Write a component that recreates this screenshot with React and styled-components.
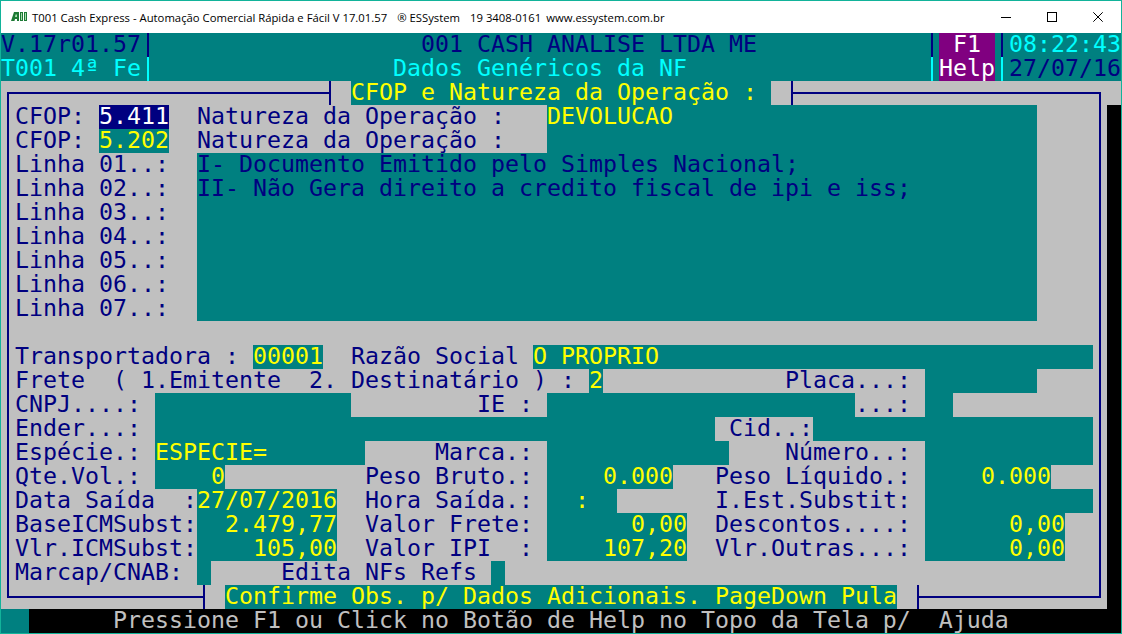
import React from "react";
import styled, { createGlobalStyle } from "styled-components";

const CELL = 14;
const NAVY = "#000080";
const TEAL = "#008080";
const GREY = "#c0c0c0";
const YELLOW = "#ffff00";
const CYAN = "#00ffff";

const Global = createGlobalStyle`
  html, body { margin: 0; padding: 0; background: #fff; overflow: hidden; }
`;

const Window = styled.div`
  width: 1122px;
  height: 634px;
  box-sizing: border-box;
  border: 1px solid #12b39a;
  display: flex;
  flex-direction: column;
  overflow: hidden;
`;

const TitleBar = styled.div`
  height: 32px;
  background: #fff;
  display: flex;
  align-items: center;
  padding-left: 10px;
  font-family: "Open Sans", "Noto Sans", sans-serif;
  font-size: 11.3px;
  color: #000;
  white-space: pre;
`;

const AppIcon = styled.svg`
  width: 16px;
  height: 9px;
  margin-right: 5px;
  margin-top: -1px;
`;

const TitlePart = styled.span`
  margin-left: ${(p) => p.$gap || 0}px;
`;

const Controls = styled.div`
  margin-left: auto;
  display: flex;
  height: 100%;
`;

const ControlButton = styled.div`
  width: 46px;
  display: flex;
  align-items: center;
  justify-content: center;
  svg { width: 10px; height: 10px; display: block; margin-top: -1px; }
`;

const Screen = styled.div`
  width: ${80 * CELL}px;
  display: flex;
  flex-direction: column;
  font-family: "DejaVu Sans Mono", "Liberation Mono", monospace;
  font-size: 23.25px;
  line-height: 22px;
`;

const Row = styled.div`
  display: flex;
  height: 24px;
  background: ${(p) => p.$bg || GREY};
`;

const Body = styled.div`
  display: flex;
  width: ${77 * CELL}px;
`;

const Cell = styled.div`
  flex: none;
  width: ${(p) => p.$cols * CELL}px;
  height: 24px;
  white-space: pre;
  color: ${(p) => p.$fg || NAVY};
  background: ${(p) => p.$bg || "transparent"};
`;

const Label = styled(Cell)``;
const Field = styled(Cell).attrs((p) => ({ $bg: TEAL, $fg: p.$fg || YELLOW }))``;
const Selected = styled(Cell).attrs({ $bg: NAVY, $fg: "#fff" })``;
const HelpKey = styled(Cell).attrs({ $bg: "#800080", $fg: "#fff" })``;
const Shadow = styled(Cell).attrs({ $cols: 1, $bg: "#000" })``;
const StatusText = styled(Cell).attrs({ $fg: GREY })``;

const boxLayers = ({ $up, $down, $left, $right, $color = NAVY }) => {
  const g = `linear-gradient(${$color},${$color})`;
  const layers = [];
  if ($up) layers.push(`${g} 6px 0 / 2px 13px no-repeat`);
  if ($down) layers.push(`${g} 6px 11px / 2px 13px no-repeat`);
  if ($left) layers.push(`${g} 0 11px / 8px 2px no-repeat`);
  if ($right) layers.push(`${g} 6px 11px / 8px 2px no-repeat`);
  return layers.join(",");
};

const BoxLine = styled.div`
  flex: none;
  width: ${CELL}px;
  height: 24px;
  background: ${boxLayers};
`;

const HLine = styled.div`
  flex: none;
  width: ${(p) => p.$cols * CELL}px;
  height: 24px;
  background: linear-gradient(${NAVY}, ${NAVY}) 0 11px / 100% 2px no-repeat;
`;

const Vert = (p) => <BoxLine $up $down {...p} />;

const FrameRow = ({ children }) => (
  <Row>
    <Vert />
    <Body>{children}</Body>
    <Vert />
    <Shadow />
  </Row>
);

const linhas = [
  ["Linha 01..:", "I- Documento Emitido pelo Simples Nacional;"],
  ["Linha 02..:", "II- Não Gera direito a credito fiscal de ipi e iss;"],
  ["Linha 03..:", ""],
  ["Linha 04..:", ""],
  ["Linha 05..:", ""],
  ["Linha 06..:", ""],
  ["Linha 07..:", ""],
];

export default function App() {
  return (
    <>
      <Global />
      <Window>
        <TitleBar>
          <AppIcon viewBox="0 0 16 9">
            <path fill="#1d7a35" d="M0 9 3 0h5v9H6V7H4L3.5 9zM9 0h3v9H9zM13 0h3v9h-3z" />
            <path fill="#a8dcae" d="M4.5 2.5h1.5V5H4zM10 1h1v7h-1zM14 1h1v7h-1z" />
          </AppIcon>
          <TitlePart>T001 Cash Express - Automação Comercial Rápida e Fácil V 17.01.57</TitlePart>
          <TitlePart $gap={10}>® ESSystem</TitlePart>
          <TitlePart $gap={10}>19 3408-0161</TitlePart>
          <TitlePart $gap={5}>www.essystem.com.br</TitlePart>
          <Controls>
            <ControlButton>
              <svg viewBox="0 0 10 10"><path d="M0 5.5h10" stroke="#000" /></svg>
            </ControlButton>
            <ControlButton>
              <svg viewBox="0 0 10 10"><rect x=".5" y=".5" width="9" height="9" fill="none" stroke="#000" /></svg>
            </ControlButton>
            <ControlButton>
              <svg viewBox="0 0 10 10"><path d="M.3.3l9.4 9.4M9.7.3.3 9.7" stroke="#000" fill="none" /></svg>
            </ControlButton>
          </Controls>
        </TitleBar>
        <Screen>
          <Row $bg={TEAL}>
            <Label $cols={10}>V.17r01.57</Label>
            <Vert />
            <Label $cols={19} />
            <Label $cols={36}>001 CASH ANALISE LTDA ME</Label>
            <Vert />
            <HelpKey $cols={4}> F1</HelpKey>
            <Vert />
            <Label $cols={8} $fg={CYAN}>08:22:43</Label>
          </Row>
          <Row $bg={TEAL}>
            <Label $cols={10} $fg={CYAN}>T001 4ª Fe</Label>
            <Vert $color={CYAN} />
            <Label $cols={17} />
            <Label $cols={38} $fg={CYAN}>Dados Genéricos da NF</Label>
            <Vert $color={CYAN} />
            <HelpKey $cols={4}>Help</HelpKey>
            <Vert $color={CYAN} />
            <Label $cols={8}>27/07/16</Label>
          </Row>
          <Row>
            <BoxLine $down $right />
            <HLine $cols={22} />
            <BoxLine $up $down $left />
            <Label $cols={1} />
            <Field $cols={30}>CFOP e Natureza da Operação :</Field>
            <Label $cols={1} />
            <BoxLine $up $down $right />
            <HLine $cols={21} />
            <BoxLine $down $left />
          </Row>
          <FrameRow>
            <Label $cols={6}>CFOP: </Label>
            <Selected $cols={5}>5.411</Selected>
            <Label $cols={2} />
            <Label $cols={25}>Natureza da Operação :</Label>
            <Field $cols={35}>DEVOLUCAO</Field>
          </FrameRow>
          <FrameRow>
            <Label $cols={6}>CFOP: </Label>
            <Field $cols={5}>5.202</Field>
            <Label $cols={2} />
            <Label $cols={25}>Natureza da Operação :</Label>
            <Field $cols={35} />
          </FrameRow>
          {linhas.map(([name, text]) => (
            <FrameRow key={name}>
              <Label $cols={13}>{name}</Label>
              <Field $cols={60} $fg={NAVY}>{text}</Field>
            </FrameRow>
          ))}
          <FrameRow />
          <FrameRow>
            <Label $cols={17}>Transportadora : </Label>
            <Field $cols={5}>00001</Field>
            <Label $cols={15}>  Razão Social </Label>
            <Field $cols={40}>O PROPRIO</Field>
          </FrameRow>
          <FrameRow>
            <Label $cols={41}>Frete  ( 1.Emitente  2. Destinatário ) : </Label>
            <Field $cols={1}>2</Field>
            <Label $cols={23}>             Placa...:</Label>
            <Field $cols={8} />
          </FrameRow>
          <FrameRow>
            <Label $cols={10}>CNPJ....:</Label>
            <Field $cols={14} />
            <Label $cols={14}>         IE :</Label>
            <Field $cols={22} />
            <Label $cols={5}>...:</Label>
            <Field $cols={2} />
          </FrameRow>
          <FrameRow>
            <Label $cols={10}>Ender...:</Label>
            <Field $cols={40} />
            <Label $cols={7}> Cid..:</Label>
            <Field $cols={20} />
          </FrameRow>
          <FrameRow>
            <Label $cols={10}>Espécie.:</Label>
            <Field $cols={15}>ESPECIE=</Field>
            <Label $cols={13}>     Marca.:</Label>
            <Field $cols={13} />
            <Label $cols={14}>    Número..:</Label>
            <Field $cols={12} />
          </FrameRow>
          <FrameRow>
            <Label $cols={10}>Qte.Vol.:</Label>
            <Field $cols={5}>    0</Field>
            <Label $cols={23}>          Peso Bruto.:</Label>
            <Field $cols={9}>    0.000</Field>
            <Label $cols={18}>   Peso Líquido.:</Label>
            <Field $cols={9}>    0.000</Field>
          </FrameRow>
          <FrameRow>
            <Label $cols={13}>Data Saída  :</Label>
            <Field $cols={10}>27/07/2016</Field>
            <Label $cols={15}>  Hora Saída.:</Label>
            <Field $cols={5}>  :</Field>
            <Label $cols={22}>       I.Est.Substit:</Label>
            <Field $cols={12} />
          </FrameRow>
          <FrameRow>
            <Label $cols={13}>BaseICMSubst:</Label>
            <Field $cols={10}>  2.479,77</Field>
            <Label $cols={15}>  Valor Frete:</Label>
            <Field $cols={10}>      0,00</Field>
            <Label $cols={17}>  Descontos....:</Label>
            <Field $cols={10}>      0,00</Field>
          </FrameRow>
          <FrameRow>
            <Label $cols={13}>Vlr.ICMSubst:</Label>
            <Field $cols={10}>    105,00</Field>
            <Label $cols={15}>  Valor IPI  :</Label>
            <Field $cols={10}>    107,20</Field>
            <Label $cols={17}>  Vlr.Outras...:</Label>
            <Field $cols={10}>      0,00</Field>
          </FrameRow>
          <FrameRow>
            <Label $cols={13}>Marcap/CNAB:</Label>
            <Field $cols={1} />
            <Label $cols={20}>     Edita NFs Refs</Label>
            <Field $cols={1} />
          </FrameRow>
          <Row>
            <BoxLine $up $right />
            <HLine $cols={13} />
            <BoxLine $up $down $left />
            <Label $cols={1} />
            <Field $cols={48}>Confirme Obs. p/ Dados Adicionais. PageDown Pula</Field>
            <Label $cols={1} />
            <BoxLine $up $down $right />
            <HLine $cols={12} />
            <BoxLine $up $left />
            <Shadow />
          </Row>
          <Row $bg="#000">
            <Field $cols={2} />
            <Label $cols={6} />
            <StatusText $cols={72}>Pressione F1 ou Click no Botão de Help no Topo da Tela p/  Ajuda</StatusText>
          </Row>
        </Screen>
      </Window>
    </>
  );
}
